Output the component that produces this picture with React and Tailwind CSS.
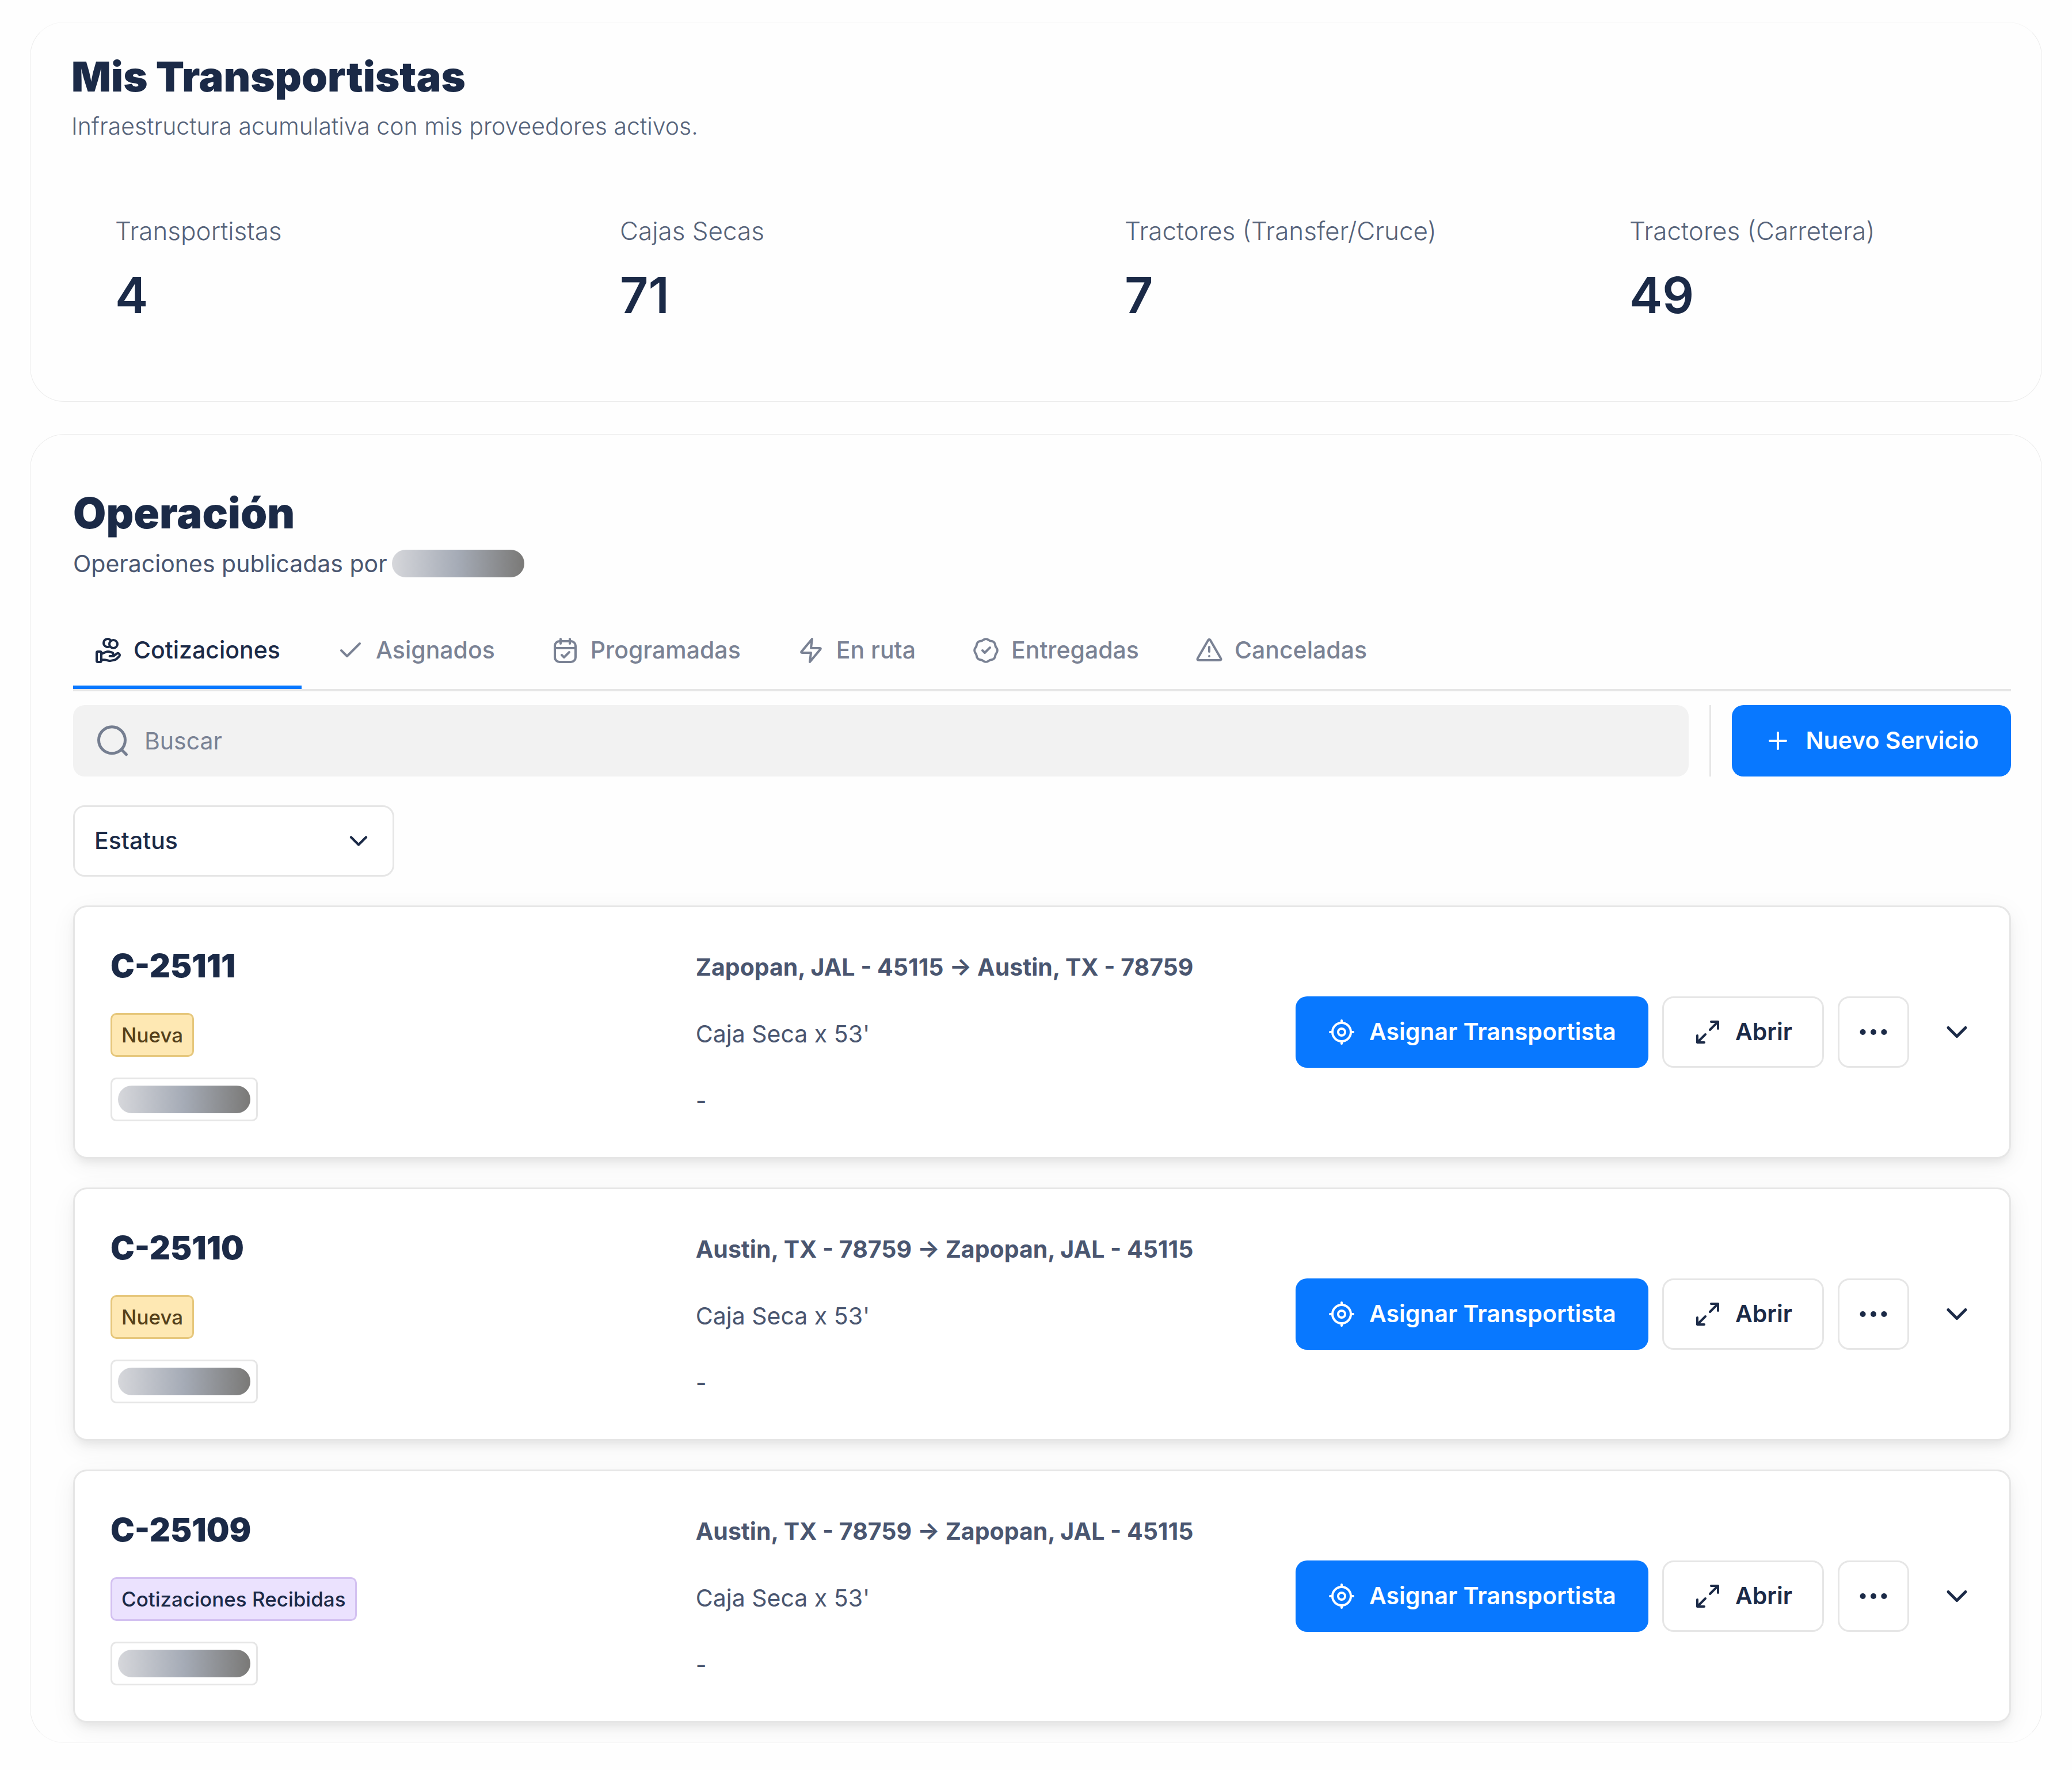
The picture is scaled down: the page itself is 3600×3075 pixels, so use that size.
import { useState } from 'react';

const Icon = ({ className = 'size-12', children }) => (
  <svg
    viewBox="0 0 24 24"
    fill="none"
    stroke="currentColor"
    strokeWidth="2"
    strokeLinecap="round"
    strokeLinejoin="round"
    className={`shrink-0 ${className}`}
    aria-hidden="true"
  >
    {children}
  </svg>
);

const CoinsHandIcon = () => (
  <Icon>
    <path d="M6 20.09h2.61c.34 0 .68.04 1.01.12l2.76.67c.6.15 1.22.16 1.82.04l3.05-.59a4.2 4.2 0 0 0 2.13-1.11l2.16-2.1a1.5 1.5 0 0 0 0-2.17 1.62 1.62 0 0 0-2.06-.14l-2.52 1.83c-.36.27-.8.41-1.25.41h-2.42 1.54c.87 0 1.58-.69 1.58-1.53v-.31c0-.7-.5-1.32-1.2-1.49l-2.38-.58a5 5 0 0 0-1.19-.14c-.96 0-2.71.8-2.71.8L6 15.02" />
    <rect x="2" y="13" width="4" height="9" rx="1" />
    <circle cx="16.5" cy="6.5" r="3.5" />
    <path d="M14.28 3.37A3.5 3.5 0 1 0 13.2 8.57" />
  </Icon>
);

const CheckIcon = () => (
  <Icon>
    <path d="M20 6 9 17l-5-5" />
  </Icon>
);

const CalendarCheckIcon = () => (
  <Icon>
    <path d="M21 10H3M16 2v4M8 2v4M9 16l2 2 4.5-4.5" />
    <rect x="3" y="4" width="18" height="18" rx="4" />
  </Icon>
);

const ZapIcon = () => (
  <Icon>
    <path d="M13 2 4.09 12.69c-.35.42-.52.63-.52.8 0 .16.06.3.18.4.14.11.41.11.96.11H12l-1 8 8.91-10.69c.35-.42.52-.63.52-.8 0-.16-.06-.3-.18-.4-.14-.11-.41-.11-.96-.11H12l1-8Z" />
  </Icon>
);

const VerifiedIcon = () => (
  <Icon>
    <path d="m9 12 2 2 4.5-4.5" />
    <path
      strokeWidth="1.8"
      transform="translate(12 12) scale(1.11) translate(-12 -12)"
      d="M7.835 4.697a3.42 3.42 0 0 0 1.946-.806 3.42 3.42 0 0 1 4.438 0 3.42 3.42 0 0 0 1.946.806 3.42 3.42 0 0 1 3.138 3.138 3.42 3.42 0 0 0 .806 1.946 3.42 3.42 0 0 1 0 4.438 3.42 3.42 0 0 0-.806 1.946 3.42 3.42 0 0 1-3.138 3.138 3.42 3.42 0 0 0-1.946.806 3.42 3.42 0 0 1-4.438 0 3.42 3.42 0 0 0-1.946-.806 3.42 3.42 0 0 1-3.138-3.138 3.42 3.42 0 0 0-.806-1.946 3.42 3.42 0 0 1 0-4.438 3.42 3.42 0 0 0 .806-1.946 3.42 3.42 0 0 1 3.138-3.138Z"
    />
  </Icon>
);

const AlertIcon = () => (
  <Icon>
    <path d="M12 9v4M12 17h.01M10.62 3.89 2.39 18.1c-.46.79-.68 1.18-.65 1.5.03.29.18.54.41.71.26.19.71.19 1.62.19h16.45c.92 0 1.37 0 1.63-.19.23-.17.38-.42.41-.71.03-.32-.19-.71-.65-1.5L13.38 3.89c-.45-.78-.68-1.18-.97-1.31a1 1 0 0 0-.82 0c-.29.13-.52.53-.97 1.31Z" />
  </Icon>
);

const SearchIcon = () => (
  <Icon className="size-15 text-[#757e90]">
    <circle cx="11" cy="11.5" r="9.2" />
    <path d="m21 21.5-3.4-3.4" />
  </Icon>
);

const PlusIcon = () => (
  <Icon>
    <path d="M12 5v14M5 12h14" />
  </Icon>
);

const TargetIcon = () => (
  <Icon>
    <circle cx="12" cy="12" r="8" />
    <circle cx="12" cy="12" r="3" />
    <path d="M12 2v2M12 20v2M2 12h2M20 12h2" />
  </Icon>
);

const ExpandIcon = () => (
  <Icon>
    <path d="m14 10 7-7M21 3h-6M21 3v6M10 14l-7 7M3 21h6M3 21v-6" />
  </Icon>
);

const DotsIcon = () => (
  <Icon>
    <g fill="currentColor" stroke="none">
      <circle cx="2.8" cy="12" r="2.5" />
      <circle cx="12" cy="12" r="2.5" />
      <circle cx="21.2" cy="12" r="2.5" />
    </g>
  </Icon>
);

const ChevronIcon = ({ className }) => (
  <Icon className={className}>
    <path d="m6 9 6 6 6-6" />
  </Icon>
);

const stats = [
  { label: 'Transportistas', value: 4 },
  { label: 'Cajas Secas', value: 71 },
  { label: 'Tractores (Transfer/Cruce)', value: 7 },
  { label: 'Tractores (Carretera)', value: 49 },
];

const tabs = [
  { id: 'cotizaciones', label: 'Cotizaciones', icon: CoinsHandIcon },
  { id: 'asignados', label: 'Asignados', icon: CheckIcon },
  { id: 'programadas', label: 'Programadas', icon: CalendarCheckIcon },
  { id: 'ruta', label: 'En ruta', icon: ZapIcon },
  { id: 'entregadas', label: 'Entregadas', icon: VerifiedIcon },
  { id: 'canceladas', label: 'Canceladas', icon: AlertIcon },
];

const services = [
  { id: 'C-25111', status: 'Nueva', route: 'Zapopan, JAL - 45115 → Austin, TX - 78759', cargo: "Caja Seca x 53'", note: '-' },
  { id: 'C-25110', status: 'Nueva', route: 'Austin, TX - 78759 → Zapopan, JAL - 45115', cargo: "Caja Seca x 53'", note: '-' },
  { id: 'C-25109', status: 'Cotizaciones Recibidas', route: 'Austin, TX - 78759 → Zapopan, JAL - 45115', cargo: "Caja Seca x 53'", note: '-' },
];

const statusStyles = {
  Nueva: 'bg-[#fee8b3] border-[#e6c77c] text-[#54401a]',
  'Cotizaciones Recibidas': 'bg-[#ebe2fe] border-[#d3c1f1] text-[#1b2a47]',
};

// Hidden company name
const RedactedName = () => (
  <span className="block h-12 w-[230px] rounded-full bg-linear-to-r from-[#d6d7db] via-[#a5abb6] to-[#7a7977]" />
);

const ServiceCard = ({ service }) => (
  <article className="grid grid-cols-[1fr_1.025fr_auto] rounded-3xl border-3 border-[#e6e6e6] bg-white py-[62px] pl-[62px] pr-8 shadow-[0_10px_44px_rgba(0,0,0,0.06),0_10px_16px_-4px_rgba(0,0,0,0.07)]">
    <div className="flex flex-col items-start">
      <h3 className="text-[56px] leading-20 font-black">{service.id}</h3>
      <span
        className={`mt-[42px] flex h-19 items-center rounded-[10px] border-3 px-4 text-[35px] font-medium ${statusStyles[service.status]}`}
      >
        {service.status}
      </span>
      <div className="mt-9 flex h-19 items-center rounded-[10px] border-3 border-[#e6e6e6] px-[10px]">
        <RedactedName />
      </div>
    </div>

    <div className="flex flex-col gap-14 pt-3 text-[41px] leading-15 text-[#4a5670]">
      <p className="font-bold">{service.route}</p>
      <p>{service.cargo}</p>
      <p>{service.note}</p>
    </div>

    <div className="flex items-center gap-6 self-center text-[41px] font-semibold">
      <button className="flex h-31 items-center gap-6 rounded-[20px] bg-[#0878ff] px-14 text-white">
        <TargetIcon />
        Asignar Transportista
      </button>
      <button className="flex h-31 items-center gap-6 rounded-[20px] border-3 border-[#e6e6e6] bg-white px-13">
        <ExpandIcon />
        Abrir
      </button>
      <button
        aria-label="Más opciones"
        className="flex size-31 items-center justify-center rounded-[20px] border-3 border-[#e6e6e6] bg-white"
      >
        <DotsIcon />
      </button>
      <button aria-label="Ver detalles" className="flex h-31 w-[118px] items-center justify-center">
        <ChevronIcon className="size-15" />
      </button>
    </div>
  </article>
);

export default function App() {
  const [activeTab, setActiveTab] = useState('cotizaciones');
  const [search, setSearch] = useState('');

  return (
    <main className="flex min-h-screen flex-col gap-14 bg-[#fefefe] px-[52px] pt-[38px] pb-12 font-[Inter,sans-serif] text-[#1b2a47]">
      <section className="rounded-[60px] border border-t-[#f6f6f6] border-[#ececec] px-[71px] pt-[54px] pb-34">
        <h1 className="text-[72px] leading-20 font-black">Mis Transportistas</h1>
        <p className="mt-4 text-[41px] leading-15 font-light text-[#56637a]">
          Infraestructura acumulativa con mis proveedores activos.
        </p>
        <dl className="mt-30 grid grid-cols-4 gap-x-39">
          {stats.map((stat) => (
            <div key={stat.label} className="flex flex-col gap-8 pl-[76px] whitespace-nowrap">
              <dt className="text-[44px] leading-16 font-light text-[#56637a]">{stat.label}</dt>
              <dd className="text-[86px] leading-24 font-semibold">{stat.value}</dd>
            </div>
          ))}
        </dl>
      </section>

      <section className="overflow-hidden rounded-[60px] border border-b-[#f6f6f6] border-[#ececec] pt-[94px] pr-[53px] pb-[34px] pl-[74px]">
        <h2 className="text-[74px] leading-21 font-black">Operación</h2>
        <div className="mt-4 flex items-center gap-2 text-[41px] leading-15 text-[#4a5670]">
          <p>Operaciones publicadas por</p>
          <RedactedName />
        </div>

        <div role="tablist" className="mt-[54px] flex gap-6 border-b-4 border-[#e6e6e6]">
          {tabs.map((tab) => {
            const TabIcon = tab.icon;
            return (
              <button
                key={tab.id}
                role="tab"
                aria-selected={activeTab === tab.id}
                onClick={() => setActiveTab(tab.id)}
                className={`flex h-[134px] items-center gap-5 border-b-6 px-[37px] pt-[6px] text-[41px] font-medium ${
                  activeTab === tab.id ? 'border-[#0878ff]' : 'border-transparent text-[#7a8294]'
                }`}
              >
                <TabIcon />
                {tab.label}
              </button>
            );
          })}
        </div>

        <div className="mt-6 flex h-31 gap-9">
          <label className="flex flex-1 items-center gap-6 rounded-[20px] bg-[#f2f2f2] px-10">
            <SearchIcon />
            <input
              type="text"
              aria-label="Buscar"
              placeholder="Buscar"
              value={search}
              onChange={(e) => setSearch(e.target.value)}
              className="h-full flex-1 bg-transparent text-[41px] outline-none placeholder:text-[#7a8294]"
            />
          </label>
          <div className="w-[3px] bg-[#e6e6e6]" />
          <button className="flex items-center gap-6 rounded-[20px] bg-[#0878ff] px-14 text-[41px] font-semibold text-white">
            <PlusIcon />
            Nuevo Servicio
          </button>
        </div>

        <div className="relative mt-[50px] w-[558px]">
          <select
            aria-label="Estatus"
            className="h-31 w-full appearance-none rounded-[20px] border-3 border-[#e6e6e6] bg-white px-[34px] text-[41px] font-medium"
          >
            <option>Estatus</option>
            <option>Nueva</option>
            <option>Cotizaciones Recibidas</option>
          </select>
          <ChevronIcon className="pointer-events-none absolute top-9 right-9 size-13" />
        </div>

        <div className="mt-[50px] flex flex-col gap-[50px]">
          {services.map((service) => (
            <ServiceCard key={service.id} service={service} />
          ))}
        </div>
      </section>
    </main>
  );
}
